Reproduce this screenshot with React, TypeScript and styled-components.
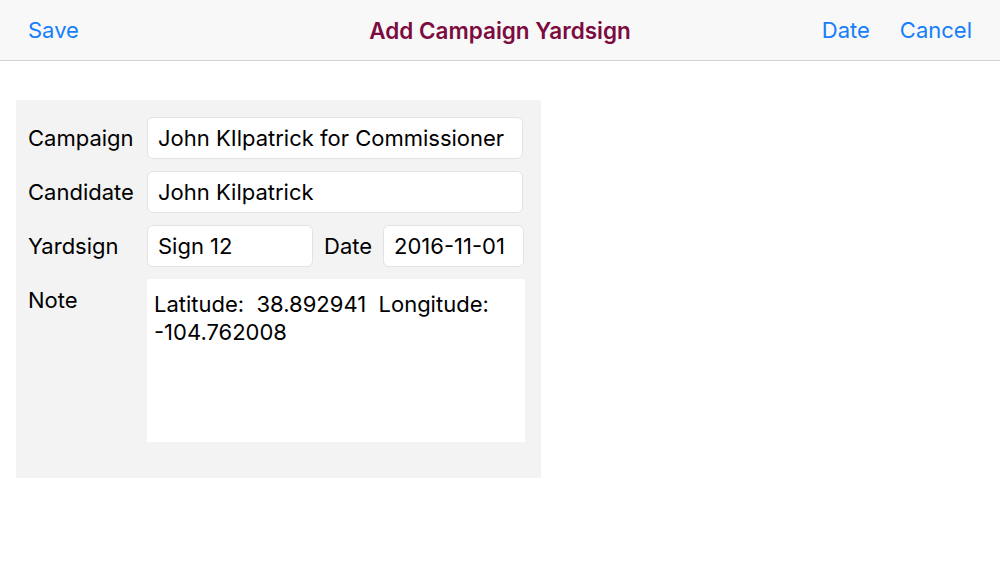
import React from 'react';
import styled, { createGlobalStyle } from 'styled-components';

const GlobalStyle = createGlobalStyle`
  html, body {
    margin: 0;
    padding: 0;
    background: #ffffff;
    font-family: Inter, 'Liberation Sans', Arial, sans-serif;
    color: #000000;
  }
`;

type FieldProps = {
  width: number;
};

const App = () => {
  return (
    <>
      <GlobalStyle />
      <NavBar>
        <NavButton>Save</NavButton>
        <Title>Add Campaign Yardsign</Title>
        <NavRight>
          <NavButton>Date</NavButton>
          <NavButton>Cancel</NavButton>
        </NavRight>
      </NavBar>
      <Content>
        <Panel>
          <Row>
            <Label>Campaign</Label>
            <Field width={376}>John KIlpatrick for Commissioner</Field>
          </Row>
          <Row>
            <Label>Candidate</Label>
            <Field width={376}>John Kilpatrick</Field>
          </Row>
          <Row>
            <Label>Yardsign</Label>
            <Field width={166}>Sign 12</Field>
            <InlineLabel>Date</InlineLabel>
            <Field width={141}>2016-11-01</Field>
          </Row>
          <NoteRow>
            <NoteLabel>Note</NoteLabel>
            <NoteBox>
              Latitude:&nbsp; 38.892941&nbsp; Longitude:
              <br />
              -104.762008
            </NoteBox>
          </NoteRow>
        </Panel>
      </Content>
    </>
  );
};

const NavBar = styled.div`
  position: relative;
  height: 60px;
  background: #f8f8f8;
  border-bottom: 1px solid #d2d2d2;
  display: flex;
  align-items: center;
  justify-content: space-between;
  padding: 0 28px;
`;

const NavButton = styled.span`
  color: #157efb;
  font-size: 22px;
`;

const NavRight = styled.div`
  display: flex;
  gap: 30px;
`;

const Title = styled.div`
  position: absolute;
  left: 0;
  right: 0;
  text-align: center;
  pointer-events: none;
  color: #7c0b40;
  font-size: 22.5px;
  font-weight: 600;
`;

const Content = styled.div`
  padding: 39px 16px;
`;

const Panel = styled.div`
  width: 525px;
  height: 378px;
  box-sizing: border-box;
  background: #f3f3f3;
  padding: 17px 16px 0 12px;
  display: flex;
  flex-direction: column;
  gap: 12px;
`;

const Row = styled.div`
  display: flex;
  align-items: center;
  height: 42px;
`;

const NoteRow = styled.div`
  display: flex;
  align-items: flex-start;
`;

const Label = styled.div`
  width: 119px;
  font-size: 22px;
  flex-shrink: 0;
`;

const NoteLabel = styled(Label)`
  padding-top: 8px;
`;

const InlineLabel = styled.div`
  font-size: 22px;
  width: 70px;
  padding-left: 11px;
  box-sizing: border-box;
`;

const Field = styled.div<FieldProps>`
  width: ${props => props.width}px;
  height: 42px;
  box-sizing: border-box;
  background: #ffffff;
  border: 1px solid #e3e3e3;
  border-radius: 6px;
  padding: 0 10px;
  display: flex;
  align-items: center;
  font-size: 22px;
  white-space: nowrap;
`;

const NoteBox = styled.div`
  width: 378px;
  height: 163px;
  box-sizing: border-box;
  background: #ffffff;
  padding: 11px 7px;
  font-size: 22px;
  line-height: 28px;
`;

export default App;
